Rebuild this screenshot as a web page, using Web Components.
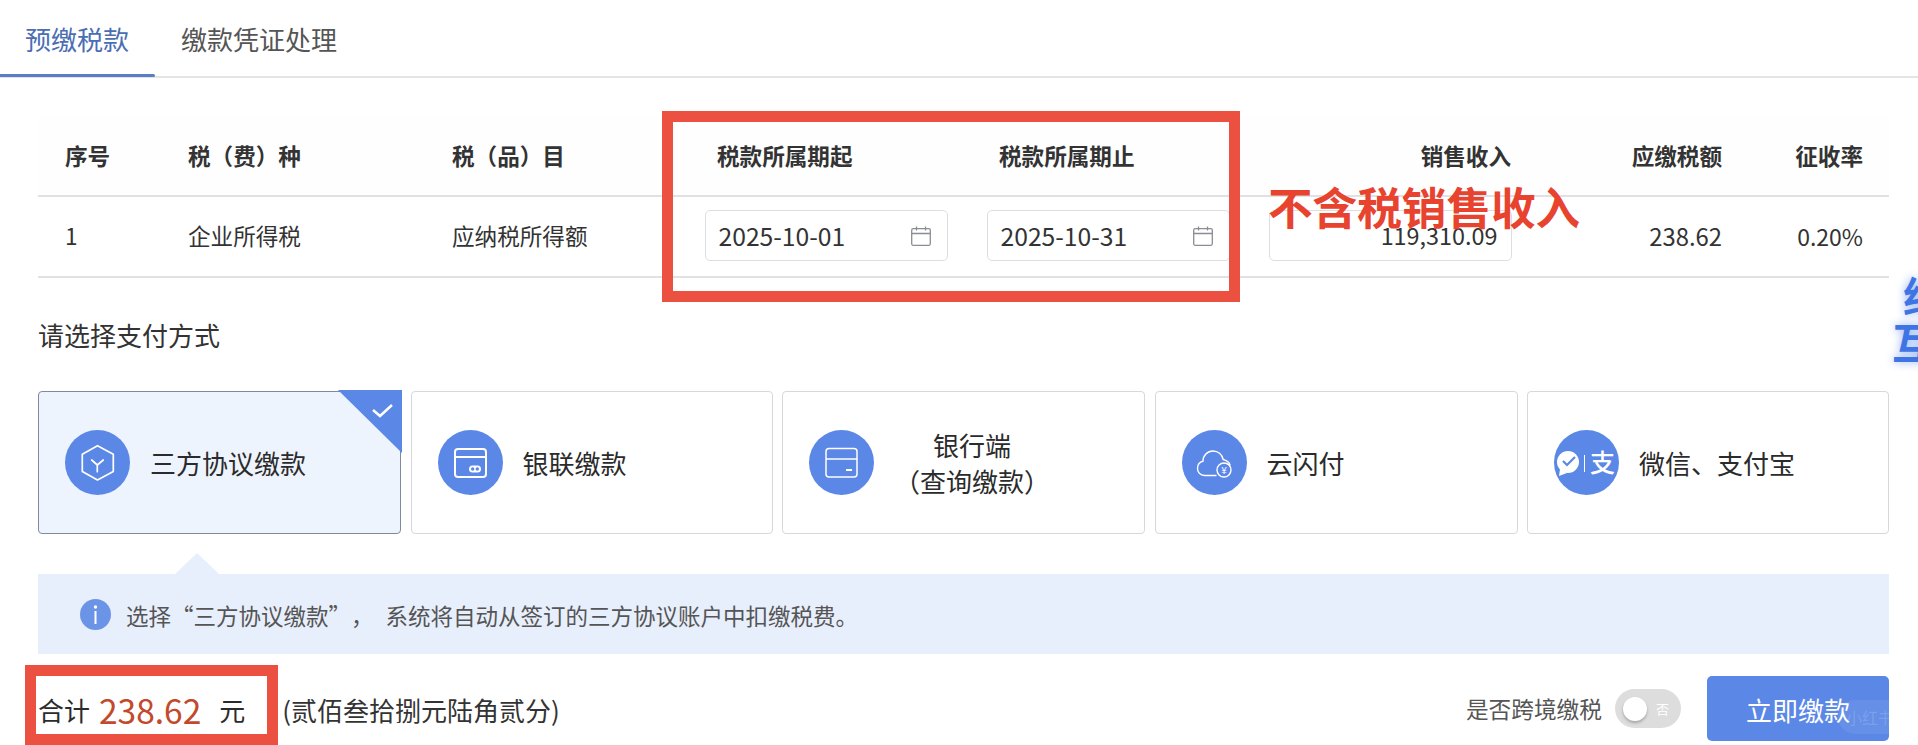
<!DOCTYPE html>
<html lang="zh-CN">
<head>
<meta charset="utf-8">
<title>预缴税款</title>
<style>
html,body{margin:0;padding:0;background:#fff;overflow:hidden;width:1918px;height:745px}
body{font-family:"Noto Sans CJK SC","Noto Sans",sans-serif;color:#333}
</style>
</head>
<body>
<tax-app></tax-app>

<template id="t-app">
<style>
:host{display:block;position:relative;width:1918px;height:745px;overflow:hidden;font-family:"Noto Sans CJK SC","Noto Sans",sans-serif}
main{display:block;padding:0 29px 0 38px}
.title{font-size:26px;line-height:36px;color:#333;margin:39px 0 0;font-weight:400}
.cards{display:grid;grid-template-columns:363px 362px 363px 363px 362px;gap:9.5px;margin-top:38px}
svg{display:block}
.mark-1{left:662px;top:111px;width:578px;height:191px}
.mark-2{left:25px;top:665px;width:253px;height:80px}
.note{position:absolute;left:1268px;top:178px;font-size:44.6px;line-height:56px;font-weight:700;color:#e8432f}
.deco{position:absolute;font-size:42px;line-height:46px;font-weight:700;color:#3f74e4;-webkit-text-stroke:1.5px #fff;paint-order:stroke fill;text-shadow:0 0 10px #8fb0f5}
.d1{left:1903px;top:272px}
.d2{left:1892px;top:318px}
</style>
<tax-tabs></tax-tabs>
<main>
<tax-table></tax-table>
<h2 class="title">请选择支付方式</h2>
<div class="cards">
<pay-card selected>
<svg slot="icon" viewBox="0 0 65 65" width="65" height="65" fill="none" stroke="#fff" stroke-width="1.700" stroke-linejoin="round" stroke-linecap="round"><path d="M32.500 15.700 48.300 24.300v17.200L32.500 50 17.300 41.500V24.300z"/><path d="M32.300 35 26.700 30M32.300 35 38.300 30M32.300 35V41.700"/></svg>
三方协议缴款</pay-card>
<pay-card>
<svg slot="icon" viewBox="0 0 65 65" width="65" height="65" fill="none" stroke="#fff" stroke-width="2"><rect x="17" y="19" width="31" height="28" rx="3"/><path d="M17 27h31"/><rect x="31" y="35.500" width="12" height="7" rx="3.500" fill="#fff" stroke="none"/><circle cx="34.700" cy="39" r="1.700" fill="#5b87e6" stroke="none"/><circle cx="39.300" cy="39" r="1.700" fill="#5b87e6" stroke="none"/></svg>
银联缴款</pay-card>
<pay-card>
<svg slot="icon" viewBox="0 0 65 65" width="65" height="65" fill="none" stroke="#fff" stroke-width="1.500"><rect x="17" y="18.500" width="31" height="28.500" rx="3"/><path d="M17 29h31"/><path d="M37 40h6" stroke-width="2"/></svg>
<div style="text-align:center;width:156px;line-height:36px">银行端<br>（查询缴款）</div></pay-card>
<pay-card>
<svg slot="icon" viewBox="0 0 65 65" width="65" height="65" fill="none" stroke="#fff" stroke-width="1.400" stroke-linecap="round"><path d="M34 45.500H22.500C18 45.500 15.500 42 15.500 38.500 15.500 34.500 18 32 21 31.300 20.800 25.500 25.500 21 31 21c5 0 9 3.500 10.200 8.500 3.300.8 6 3.200 6.800 5.500"/><circle cx="42" cy="40" r="7"/><text x="42" y="44" text-anchor="middle" font-size="10" fill="#fff" stroke="none" font-family="Noto Sans CJK SC">¥</text></svg>
云闪付</pay-card>
<pay-card>
<svg slot="icon" viewBox="0 0 65 65" width="65" height="65"><circle cx="14" cy="32" r="11" fill="#fff"/><path d="M6 39 5 46l8-3z" fill="#fff"/><path d="M9 31l4 4 8-8" fill="none" stroke="#5b87e6" stroke-width="2.200"/><path d="M30.500 25v17" stroke="#fff" stroke-width="1"/><text x="36" y="42" font-size="25" font-weight="500" fill="#fff" font-family="Noto Sans CJK SC">支</text></svg>
微信、支付宝</pay-card>
</div>
<notice-bar>选择“三方协议缴款”， 系统将自动从签订的三方协议账户中扣缴税费。</notice-bar>
<pay-footer></pay-footer>
</main>
<mark-box class="mark-1"></mark-box>
<mark-box class="mark-2"></mark-box>
<div class="note">不含税销售收入</div>
<div class="deco d1">绝</div>
<div class="deco d2">互</div>
</template>

<template id="t-tabs">
<style>
:host{display:flex;height:76px;border-bottom:2px solid #e2e4e8;box-sizing:content-box;font-size:26px;line-height:36px}
.tab{position:relative;box-sizing:border-box;height:76px;padding-top:21px;color:#555}
.a{width:155px;padding-left:25px;color:#4a6db3}
.a::after{content:"";position:absolute;left:0;right:0;bottom:-1px;height:3px;background:#5a7ec4;border-radius:0 2px 2px 0}
.b{padding-left:26px}
</style>
<div class="tab a">预缴税款</div><div class="tab b">缴款凭证处理</div>
</template>

<template id="t-table">
<style>
:host{display:block;margin-top:39px;font-size:22.6px;color:#333}
.r{display:grid;grid-template-columns:150px 264px 252.5px 282px 282px 242.5px 211px 167px;align-items:center;border-bottom:2px solid #dfe1e5;box-sizing:border-box}
.h{height:80px;font-weight:700;background:#fefefe;padding-bottom:1px;color:#333}
.d{height:81px;padding-bottom:2px}
.s{padding-left:27px}
.dh{padding-left:12.500px}
.n{text-align:right}
.amt{font-size:23.800px}
.rt{text-align:right;padding-right:26px}
.pct{font-size:23px}
</style>
<div class="r h">
<div class="s">序号</div><div>税（费）种</div><div>税（品）目</div>
<div class="dh">税款所属期起</div><div class="dh">税款所属期止</div>
<div class="n">销售收入</div><div class="n">应缴税额</div><div class="rt">征收率</div>
</div>
<div class="r d">
<div class="s">1</div><div>企业所得税</div><div>应纳税所得额</div>
<div><date-field>2025-10-01</date-field></div><div><date-field>2025-10-31</date-field></div>
<div><date-field plain>119,310.09</date-field></div><div class="n amt">238.62</div><div class="rt pct">0.20%</div>
</div>
</template>

<template id="t-date">
<style>
:host{display:flex;align-items:center;justify-content:space-between;box-sizing:border-box;width:243px;height:51px;padding:0 16px 0 13px;background:#fff;border:1.500px solid #dcdee2;border-radius:5px;font-size:24.700px;color:#333}
:host([plain]){justify-content:flex-end;padding-right:13px;font-size:23.400px}
:host([plain]) svg{display:none}
.v{margin-top:-2px}
svg{display:block;flex:none}
</style>
<span class="v"><slot></slot></span>
<svg viewBox="0 0 20 20" width="20" height="20" fill="none" stroke="#8a8d93" stroke-width="1.300"><rect x=".7" y="2.700" width="18.600" height="16.600" rx="1.500"/><path d="M.7 7.500h18.600M5.500 .5v4M14.500 .5v4"/></svg>
</template>

<template id="t-card">
<style>
:host{display:flex;align-items:center;position:relative;box-sizing:border-box;height:143px;padding:0 0 0 26px;background:#fff;border:1.500px solid #d6d8dc;border-radius:4px;font-size:26px;line-height:36px;color:#2b2b2b}
:host([selected]){background:#eef4fd;border-color:#7f8b9c}
.ic{flex:none;width:65px;height:65px;border-radius:50%;background:#5b87e6;margin-right:20px;overflow:hidden}
.tx{margin-top:1px}
.cn{display:none;position:absolute;right:-2px;top:-2px}
:host([selected]) .cn{display:block}
</style>
<div class="ic"><slot name="icon"></slot></div>
<div class="tx"><slot></slot></div>
<svg class="cn" viewBox="0 0 64 63" width="64" height="63"><path d="M0 0h64v63z" fill="#5b87e6"/><path d="M35 20l7 6 12-11" fill="none" stroke="#fff" stroke-width="2.500"/></svg>
</template>

<template id="t-notice">
<style>
:host{display:flex;align-items:center;position:relative;box-sizing:border-box;height:80px;margin-top:40px;padding:1px 0 0 42px;background:#e8effc;font-size:22.5px;color:#555;text-spacing-trim:space-all;word-spacing:7px}
:host::before{content:"";position:absolute;left:137px;top:-21px;width:44px;height:21px;background:#e8effc;clip-path:polygon(50% 0,100% 100%,0 100%)}
.i{flex:none;width:31px;height:31px;border-radius:50%;background:#6c94e6;margin-right:15px;margin-top:-1px}
svg{display:block}
</style>
<div class="i"><svg viewBox="0 0 31 31" width="31" height="31"><circle cx="15.500" cy="8" r="1.700" fill="#fff"/><rect x="14.500" y="12" width="2" height="13" fill="#fff"/></svg></div>
<span><slot></slot></span>
</template>

<template id="t-footer">
<style>
:host{display:flex;align-items:center;height:65px;margin-top:22px;font-size:26px;color:#2b2b2b}
.total{display:flex;align-items:center;margin-top:2px;line-height:44px}
.amt{font-size:33.500px;color:#c2492c;margin:0 18px 0 9px}
.cn{margin-left:37px;color:#333;margin-top:2px}
.sp{flex:1}
.lb{font-size:22.700px;color:#555;margin-right:13px}
.btn{position:relative;overflow:hidden;width:182px;height:65px;border-radius:5px;background:#5b87e6;color:#fff;display:flex;align-items:center;justify-content:center;font-size:26px;padding-top:2px;box-sizing:border-box}
.wm{position:absolute;left:131px;top:24px;height:34px;width:90px;border-radius:17px;background:rgba(255,255,255,.07);color:rgba(255,255,255,.16);font-size:16px;line-height:34px;padding-left:8px}
</style>
<div class="total"><span>合计</span><span class="amt">238.62</span><span>元</span></div>
<span class="cn">(贰佰叁拾捌元陆角贰分)</span>
<div class="sp"></div>
<span class="lb">是否跨境缴税</span>
<fee-switch style="margin-right:26px"></fee-switch>
<div class="btn">立即缴款<span class="wm">小红书</span></div>
</template>

<template id="t-switch">
<style>
:host{display:flex;align-items:center;box-sizing:border-box;width:66px;height:39px;border-radius:20px;background:#dddddd;padding:0 0 0 8px;font-size:13px;color:#fff}
.k{width:24px;height:24px;border-radius:50%;background:#fff;box-shadow:0 2px 3px rgba(0,0,0,.25);margin-right:9px}
</style>
<div class="k"></div>否
</template>

<template id="t-mark">
<style>
:host{display:block;position:absolute;box-sizing:border-box;border:11px solid #ec5041;pointer-events:none}
</style>
</template>

<script>
function def(tag, tpl){
  customElements.define(tag, class extends HTMLElement{
    constructor(){
      super();
      this.attachShadow({mode:'open'}).appendChild(document.getElementById(tpl).content.cloneNode(true));
    }
  });
}
def('tax-tabs','t-tabs');
def('date-field','t-date');
def('tax-table','t-table');
def('pay-card','t-card');
def('notice-bar','t-notice');
def('fee-switch','t-switch');
def('pay-footer','t-footer');
def('mark-box','t-mark');
def('tax-app','t-app');
</script>
</body>
</html>
